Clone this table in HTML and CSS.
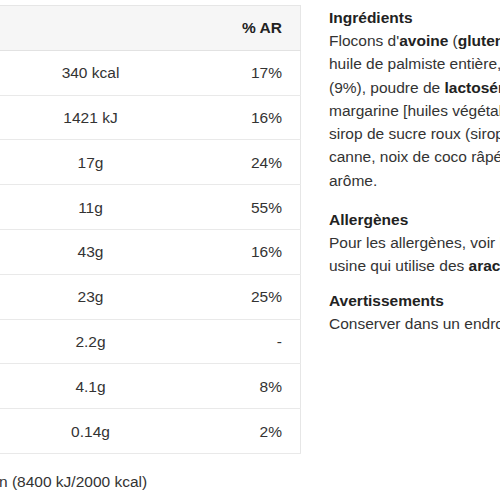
FILE: index.html
```html
<!DOCTYPE html>
<html lang="fr">
<head>
<meta charset="utf-8">
<title>Informations nutritionnelles</title>
<link rel="stylesheet" href="styles.css">
</head>
<body>
<div class="page">
  <section class="nutrition">
    <table class="nutri-table">
      <colgroup><col class="w-name"><col class="w-val"><col class="w-ar"></colgroup>
      <thead>
        <tr><th class="c-name">Valeurs nutritionnelles (pour 100 g)</th><th class="c-val"></th><th class="c-ar">% AR</th></tr>
      </thead>
      <tbody>
        <tr><td class="c-name">Énergie</td><td class="c-val">340 kcal</td><td class="c-ar">17%</td></tr>
        <tr><td class="c-name">Énergie</td><td class="c-val">1421 kJ</td><td class="c-ar">16%</td></tr>
        <tr><td class="c-name">Matières grasses</td><td class="c-val">17g</td><td class="c-ar">24%</td></tr>
        <tr><td class="c-name">dont acides gras saturés</td><td class="c-val">11g</td><td class="c-ar">55%</td></tr>
        <tr><td class="c-name">Glucides</td><td class="c-val">43g</td><td class="c-ar">16%</td></tr>
        <tr><td class="c-name">dont sucres</td><td class="c-val">23g</td><td class="c-ar">25%</td></tr>
        <tr><td class="c-name">Fibres alimentaires</td><td class="c-val">2.2g</td><td class="c-ar">-</td></tr>
        <tr><td class="c-name">Protéines</td><td class="c-val">4.1g</td><td class="c-ar">8%</td></tr>
        <tr><td class="c-name">Sel</td><td class="c-val">0.14g</td><td class="c-ar">2%</td></tr>
      </tbody>
    </table>
    <p class="note">AR = Apport de référence pour un adulte moyen (8400 kJ/2000 kcal)</p>
  </section>
  <section class="info">
    <div class="block block-first">
      <h3 class="block-title">Ingrédients</h3>
      <p class="block-text">Flocons d'<b>avoine</b> (<b>gluten</b>) 43%, sucre roux,<br>huile de palmiste entière, farine de <b>blé</b><br>(9%), poudre de <b>lactosérum</b> (<b>lait</b>),<br>margarine [huiles végétales (palme, colza),<br>sirop de sucre roux (sirop de sucre de<br>canne, noix de coco râpée, sel, émulsifiant,<br>arôme.</p>
    </div>
    <div class="block">
      <h3 class="block-title">Allergènes</h3>
      <p class="block-text">Pour les allergènes, voir les ingrédients en gras. Fabriqué dans une<br>usine qui utilise des <b>arachides</b> et des <b>fruits à coque</b>.</p>
    </div>
    <div class="block">
      <h3 class="block-title">Avertissements</h3>
      <p class="block-text">Conserver dans un endroit frais et sec.</p>
    </div>
  </section>
</div>
</body>
</html>
```

FILE: styles.css
```css
html, body {
  margin: 0;
  padding: 0;
  background: #ffffff;
  overflow: hidden;
}

body {
  font-family: "Liberation Sans", Arial, sans-serif;
  font-size: 15.5px;
  line-height: 23px;
  color: #333333;
}

.page {
  display: flex;
  align-items: flex-start;
  width: 1200px;
}

.nutrition {
  flex: none;
  width: 622px;
  margin-left: -322px;
}

.nutri-table {
  width: 622px;
  margin-top: 5px;
  border-collapse: collapse;
  table-layout: fixed;
  border: 1px solid #e6e6e6;
}

.w-name { width: 322px; }
.w-val { width: 180px; }
.w-ar { width: 120px; }

.nutri-table th,
.nutri-table td {
  height: 43.8px;
  padding: 0;
  border-bottom: 1px solid #e9e9e9;
  white-space: nowrap;
  overflow: hidden;
  color: #333333;
}

.nutri-table thead th {
  background: #f6f6f6;
  font-weight: bold;
  color: #222222;
  border-bottom: 1px solid #e2e2e2;
}

.nutri-table .c-name {
  text-align: left;
  padding-left: 16px;
}

.nutri-table .c-val {
  text-align: center;
}

.nutri-table .c-ar {
  text-align: right;
  padding-right: 18px;
}

.note {
  margin: 16px 0 0 0;
  white-space: nowrap;
}

.info {
  flex: none;
  margin-left: 29px;
  padding-top: 6px;
  white-space: nowrap;
}

.block {
  margin-bottom: 12px;
}

.block-first {
  margin-bottom: 16px;
}

.block-first .block-text {
  line-height: 23.3px;
}

.block-title {
  margin: 0;
  font-size: 15.5px;
  line-height: 23px;
  font-weight: bold;
  color: #222222;
}

.block-text {
  margin: 0;
}

.block-text b {
  color: #222222;
}
```
